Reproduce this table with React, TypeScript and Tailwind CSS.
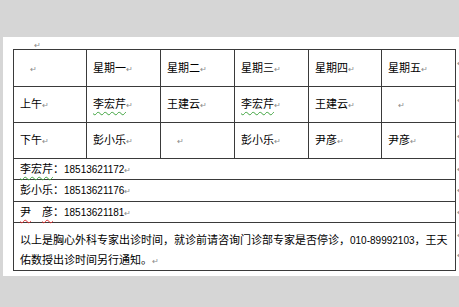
const Mark = ({ className = "" }: { className?: string }) => (
  <span className={`text-[8px] text-[#8a8a8a] align-middle ${className}`}>↵</span>
);

const days = ["星期一", "星期二", "星期三", "星期四", "星期五"];

const rows: { label: string; cells: string[] }[] = [
  { label: "上午", cells: ["李宏芹", "王建云", "李宏芹", "王建云", ""] },
  { label: "下午", cells: ["彭小乐", "", "彭小乐", "尹彦", "尹彦"] },
];

const widths = ["w-[73px]", "w-[74px]", "w-[74px]", "w-[74px]", "w-[73px]", "w-[74px]"];

const Name = ({ text }: { text: string }) =>
  text === "李宏芹" ? (
    <span className="underline decoration-wavy decoration-[#3fa33f] decoration-1 underline-offset-[3px]">
      {text}
    </span>
  ) : (
    <span>{text}</span>
  );

const phones = [
  { name: <Name text="李宏芹" />, num: "18513621172" },
  { name: <span>彭小乐</span>, num: "18513621176" },
  {
    name: (
      <span>
        <span className="underline decoration-wavy decoration-[#e03030] decoration-1 underline-offset-[3px]">尹</span>
        {"\u3000"}
        <span className="underline decoration-wavy decoration-[#e03030] decoration-1 underline-offset-[3px]">彦</span>
      </span>
    ),
    num: "18513621181",
  },
];

const cell = "border border-[#3a3a3a] px-[6px] align-middle";

export default function App() {
  return (
    <div
      className="w-[459px] h-[307px] overflow-hidden bg-[#d6d6d6] pt-[37px] pl-[3px] text-black"
      style={{ fontFamily: '"Noto Sans CJK SC", "Noto Sans", sans-serif' }}
    >
      <div className="w-[470px] h-[239px] bg-white pl-[10px]">
        <div className="h-[12px] leading-[10px] pl-[21px]">
          <Mark />
        </div>
        <table className="border-collapse text-[11px] leading-[14px]">
          <tbody>
            <tr className="h-[37px]">
              <td className={`${cell} ${widths[0]} pl-[16px]`}>
                <Mark />
              </td>
              {days.map((d, i) => (
                <td key={d} className={`${cell} ${widths[i + 1]}`}>
                  {d}
                  <Mark />
                </td>
              ))}
              <td className="pl-[1px] align-top pt-[4px]">
                <Mark />
              </td>
            </tr>
            {rows.map((r) => (
              <tr key={r.label} className="h-[36px]">
                <td className={cell}>
                  {r.label}
                  <Mark />
                </td>
                {r.cells.map((c, i) => (
                  <td key={i} className={`${cell} ${c ? "" : "pl-[16px]"}`}>
                    {c && <Name text={c} />}
                    <Mark />
                  </td>
                ))}
                <td className="pl-[1px] align-top pt-[4px]">
                  <Mark />
                </td>
              </tr>
            ))}
            {phones.map((p, i) => (
              <tr key={p.num} className={i === 1 ? "h-[22px]" : "h-[21px]"}>
                <td colSpan={6} className={cell}>
                  {p.name}：
                  <span className="text-[10px]" style={{ fontFamily: '"Liberation Sans", sans-serif' }}>
                    {p.num}
                  </span>
                  <Mark />
                </td>
                <td className="pl-[1px] align-top pt-[1px]">
                  <Mark />
                </td>
              </tr>
            ))}
            <tr className="h-[48px]">
              <td colSpan={6} className={`${cell} align-top pt-[7px] leading-[18px]`}>
                以上是胸心外科专家出诊时间，就诊前请咨询门诊部专家是否停诊，
                <span className="text-[10px]" style={{ fontFamily: '"Liberation Sans", sans-serif' }}>
                  010-89992103
                </span>
                ，王天
                <br />
                佑数授出诊时间另行通知。
                <Mark />
              </td>
              <td className="pl-[1px] align-top pt-[1px] leading-[18px]">
                <Mark />
                <br />
                <Mark />
              </td>
            </tr>
          </tbody>
        </table>
      </div>
    </div>
  );
}
